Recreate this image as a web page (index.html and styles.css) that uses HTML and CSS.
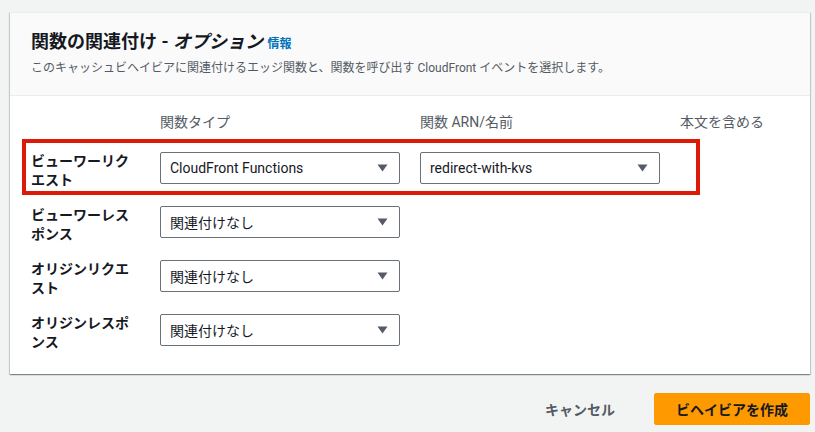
FILE: index.html
```html
<!DOCTYPE html>
<html lang="ja">
<head>
<meta charset="utf-8">
<link rel="stylesheet" href="styles.css">
</head>
<body>
<div class="page">
  <section class="card">
    <header class="card-header">
      <h2 class="title">関数の関連付け - <i>オプション</i> <a class="info" href="#">情報</a></h2>
      <p class="desc">このキャッシュビヘイビアに関連付けるエッジ関数と、関数を呼び出す CloudFront イベントを選択します。</p>
    </header>
    <div class="card-body">
      <div class="grid head">
        <div></div>
        <div class="colhead">関数タイプ</div>
        <div class="colhead">関数 ARN/名前</div>
        <div class="colhead">本文を含める</div>
      </div>
      <div class="grid row highlighted">
        <div class="label">ビューワーリクエスト</div>
        <div class="select"><span>CloudFront Functions</span><svg class="caret" width="11" height="8" viewBox="0 0 11 8"><polygon points="0.5,0.5 10.5,0.5 5.5,7.5" fill="#545b64"/></svg></div>
        <div class="select"><span>redirect-with-kvs</span><svg class="caret" width="11" height="8" viewBox="0 0 11 8"><polygon points="0.5,0.5 10.5,0.5 5.5,7.5" fill="#545b64"/></svg></div>
        <div></div>
      </div>
      <div class="grid row">
        <div class="label">ビューワーレスポンス</div>
        <div class="select"><span>関連付けなし</span><svg class="caret" width="11" height="8" viewBox="0 0 11 8"><polygon points="0.5,0.5 10.5,0.5 5.5,7.5" fill="#545b64"/></svg></div>
        <div></div>
        <div></div>
      </div>
      <div class="grid row">
        <div class="label">オリジンリクエスト</div>
        <div class="select"><span>関連付けなし</span><svg class="caret" width="11" height="8" viewBox="0 0 11 8"><polygon points="0.5,0.5 10.5,0.5 5.5,7.5" fill="#545b64"/></svg></div>
        <div></div>
        <div></div>
      </div>
      <div class="grid row">
        <div class="label">オリジンレスポンス</div>
        <div class="select"><span>関連付けなし</span><svg class="caret" width="11" height="8" viewBox="0 0 11 8"><polygon points="0.5,0.5 10.5,0.5 5.5,7.5" fill="#545b64"/></svg></div>
        <div></div>
        <div></div>
      </div>
    </div>
  </section>
  <div class="footer">
    <button class="btn btn-link">キャンセル</button>
    <button class="btn btn-primary">ビヘイビアを作成</button>
  </div>
</div>
</body>
</html>
```
FILE: styles.css
```css
*, *::before, *::after { box-sizing: border-box; }
html, body {
  margin: 0;
  padding: 0;
  background: #f2f3f3;
}
body {
  font-family: Roboto, "Noto Sans CJK JP", sans-serif;
  color: #16191f;
  font-size: 14px;
}
.page {
  padding: 12px 5px 0 10px;
}
.card {
  background: #fff;
  border-top: 1px solid #eaeded;
  box-shadow: 0 1px 1px 0 rgba(0, 28, 36, 0.3), 1px 1px 1px 0 rgba(0, 28, 36, 0.15), -1px 1px 1px 0 rgba(0, 28, 36, 0.15);
}
.card-header {
  background: #fafafa;
  border-bottom: 1px solid #eaeded;
  padding: 18px 20px 19px 21px;
}
.title {
  margin: 0;
  font-size: 18px;
  line-height: 22px;
  height: 22px;
  font-weight: 700;
  color: #16191f;
}
.title i { font-style: italic; }
.info {
  font-size: 12px;
  line-height: 12px;
  font-weight: 700;
  color: #0073bb;
  text-decoration: none;
}
.desc {
  margin: 7px 0 0;
  font-size: 12px;
  line-height: 16px;
  height: 16px;
  color: #545b64;
}
.card-body {
  padding: 16px 20px 22px 21px;
}
.grid {
  display: grid;
  grid-template-columns: 109px 240px 240px 1fr;
  column-gap: 20px;
  align-items: start;
}
.head {
  margin-bottom: 20px;
}
.colhead {
  line-height: 20px;
  color: #545b64;
}
.row + .row {
  margin-top: 16px;
}
.label {
  font-weight: 700;
  line-height: 19px;
  color: #16191f;
}
.select {
  height: 32px;
  border: 1px solid #687078;
  border-radius: 2px;
  display: flex;
  align-items: center;
  justify-content: space-between;
  padding: 0 11px 0 9px;
  color: #16191f;
  background: #fff;
}
.caret { display: block; }
.highlighted {
  position: relative;
}
.highlighted::after {
  content: "";
  position: absolute;
  top: -13px;
  left: -9px;
  width: 678px;
  bottom: -5px;
  border: 4px solid #dd1a08;
  pointer-events: none;
}
.footer {
  display: flex;
  justify-content: flex-end;
  align-items: center;
  margin-top: 19px;
  gap: 18px;
}
.btn {
  font-family: Roboto, "Noto Sans CJK JP", sans-serif;
  font-size: 14px;
  font-weight: 700;
  height: 32px;
  padding: 0 20px;
  border-radius: 2px;
  border: 1px solid transparent;
  background: none;
}
.btn-link {
  color: #545b64;
}
.btn-primary {
  background: #ff9900;
  border-color: #ff9900;
  color: #16191f;
  padding: 0 21px;
}
```
